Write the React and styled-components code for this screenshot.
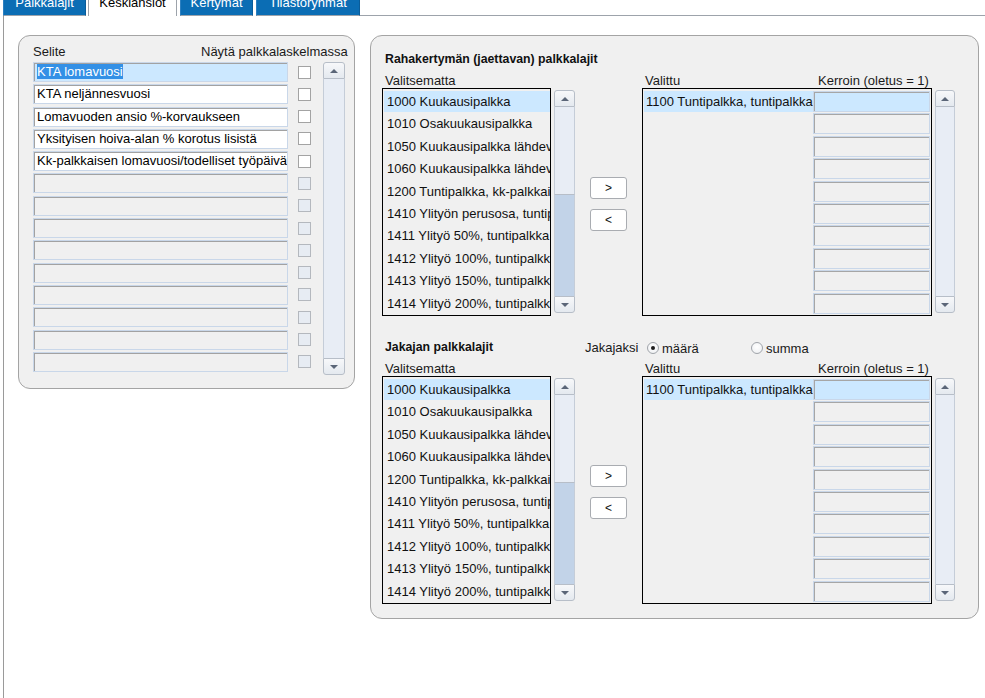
import React from "react";
import styled, { createGlobalStyle, css } from "styled-components";

const GlobalStyle = createGlobalStyle`
  html, body { margin: 0; padding: 0; background: #fff; }
  body { font-family: "Liberation Sans", Arial, sans-serif; font-size: 13px; color: #000; }
  * { box-sizing: border-box; }
`;

const Page = styled.div`
  width: 985px;
  height: 698px;
  overflow: hidden;
  background: #fff;
`;

const TabStrip = styled.div`
  display: flex;
  align-items: flex-end;
  height: 16px;
  overflow: hidden;
  padding-left: 3px;
`;

const Tab = styled.div`
  flex: none;
  width: ${(p) => p.$w}px;
  height: 27px;
  margin-right: ${(p) => p.$gap}px;
  display: flex;
  align-items: center;
  justify-content: center;
  font-size: 13px;
  ${(p) =>
    p.$active
      ? css`
          background: #fff;
          color: #000;
          border-left: 1px solid #9da3ab;
          border-right: 1px solid #9da3ab;
        `
      : css`
          background: #0b6db4;
          color: #fff;
          border-left: 1px solid #2c7fc0;
          border-right: 1px solid #0a5c99;
          border-bottom: 1px solid #9da3ab;
        `}
`;

const TabFiller = styled.div`
  flex: 1;
  height: 16px;
  border-bottom: 1px solid #9da3ab;
`;

const Content = styled.div`
  margin-left: 3px;
  border-left: 1px solid #9a9a9a;
  height: 682px;
  padding: 19px 0 0 14px;
  display: flex;
  align-items: flex-start;
  gap: 15px;
`;

const Panel = styled.div`
  flex: none;
  width: ${(p) => p.$w}px;
  height: ${(p) => p.$h}px;
  background: #f0f0f0;
  border: 1px solid #a4a4a4;
  border-radius: 12px;
`;

const LeftPanel = styled(Panel)`
  padding: 8px 0 0 14px;
`;

const HeaderRow = styled.div`
  display: grid;
  grid-template-columns: 168px auto;
  height: 15px;
  line-height: 15px;
  white-space: nowrap;
  color: #1a1a1a;
`;

const LeftBody = styled.div`
  margin-top: 3px;
  display: flex;
  align-items: flex-start;
`;

const FieldColumn = styled.div`
  width: 255px;
  display: flex;
  flex-direction: column;
  gap: 2.3px;
`;

const Field = styled.div`
  height: 20px;
  border: 1px solid #c9d7e9;
  box-shadow: inset 1px 1px 0 #a2a2a2;
  background: ${(p) => (p.$selected ? "#cce8ff" : p.$empty ? "#f0f0f0" : "#fff")};
  padding-left: 3px;
  line-height: 18px;
  white-space: nowrap;
  overflow: hidden;
`;

const Selection = styled.span`
  background: #3390e6;
  color: #fff;
`;

const CheckColumn = styled.div`
  margin-left: 10px;
  width: 13px;
  display: flex;
  flex-direction: column;
  gap: 2.3px;
`;

const CheckCell = styled.div`
  height: 20px;
  display: flex;
  align-items: center;
`;

const CheckBox = styled.div`
  width: 13px;
  height: 13px;
  border: 1px solid ${(p) => (p.$disabled ? "#b4b8be" : "#a3a3a3")};
  background: ${(p) => (p.$disabled ? "#e7ecf3" : "#fff")};
`;

const ScrollWrap = styled.div`
  flex: none;
  margin-left: ${(p) => p.$ml}px;
  margin-top: ${(p) => p.$mt || 0}px;
  width: ${(p) => p.$w}px;
  height: ${(p) => p.$h}px;
  display: flex;
  flex-direction: column;
`;

const ScrollButton = styled.div`
  flex: none;
  height: 17px;
  border: 1px solid #b7bec8;
  background: linear-gradient(#f7f8fa, #e4e9ef);
  display: flex;
  align-items: center;
  justify-content: center;
  border-radius: ${(p) => (p.$up ? "3px 3px 0 0" : "0 0 3px 3px")};
`;

const Arrow = styled.div`
  width: 0;
  height: 0;
  border-left: 4px solid transparent;
  border-right: 4px solid transparent;
  ${(p) =>
    p.$up
      ? css`border-bottom: 4px solid #5b6678;`
      : css`border-top: 4px solid #5b6678;`}
`;

const Track = styled.div`
  flex: 1;
  display: flex;
  flex-direction: column;
  background: ${(p) => (p.$thumb ? "#c2d3e8" : "#e8edf5")};
  border-left: 1px solid #c5cdd8;
  border-right: 1px solid #c5cdd8;
`;

const Thumb = styled.div`
  flex: none;
  height: ${(p) => p.$h}px;
  background: #e8edf5;
  border-bottom: 1px solid #b7bec8;
  margin: 0 -1px;
  border-left: 1px solid #c5cdd8;
  border-right: 1px solid #c5cdd8;
`;

function Scrollbar({ w, h, ml, mt, thumb }) {
  return (
    <ScrollWrap $w={w} $h={h} $ml={ml} $mt={mt}>
      <ScrollButton $up>
        <Arrow $up />
      </ScrollButton>
      <Track $thumb={!!thumb}>{thumb ? <Thumb $h={thumb} /> : null}</Track>
      <ScrollButton>
        <Arrow />
      </ScrollButton>
    </ScrollWrap>
  );
}

const RightPanel = styled(Panel)`
  padding: 16px 0 0 11px;
`;

const Section = styled.div`
  margin-top: ${(p) => p.$mt || 0}px;
`;

const SectionHead = styled.div`
  display: flex;
  align-items: center;
  height: 15px;
  padding-left: 3px;
`;

const Heading = styled.div`
  width: 200px;
  font-weight: 700;
  font-size: 12.3px;
  line-height: 15px;
  color: #111;
  white-space: nowrap;
`;

const RadioLabel = styled.div`
  width: 62px;
  color: #1a1a1a;
  line-height: 15px;
`;

const RadioOption = styled.div`
  display: flex;
  align-items: center;
  width: ${(p) => p.$w}px;
  gap: 3px;
  line-height: 15px;
  color: #1a1a1a;
  padding-top: 1px;
`;

const RadioCircle = styled.div`
  width: 12px;
  height: 12px;
  border-radius: 50%;
  border: 1px solid #a0a4aa;
  background: radial-gradient(circle at 50% 40%, #ffffff, #eceef1);
  display: flex;
  align-items: center;
  justify-content: center;
  &::after {
    content: "";
    display: ${(p) => (p.$checked ? "block" : "none")};
    width: 4px;
    height: 4px;
    border-radius: 50%;
    background: #1d1d1d;
  }
`;

const ColLabels = styled.div`
  margin-top: 6px;
  height: 15px;
  line-height: 15px;
  display: grid;
  grid-template-columns: 260px 173px auto;
  padding-left: 3px;
  color: #1a1a1a;
  white-space: nowrap;
`;

const ListRow = styled.div`
  display: flex;
  align-items: flex-start;
`;

const ListBox = styled.div`
  flex: none;
  margin-left: ${(p) => p.$ml || 0}px;
  width: ${(p) => p.$w}px;
  height: 228px;
  border: 1px solid #000;
  background: #f0f0f0;
  padding: 2px 1px;
  overflow: hidden;
  display: flex;
  align-items: flex-start;
`;

const ItemColumn = styled.div`
  width: ${(p) => p.$w}px;
  flex: none;
  display: flex;
  flex-direction: column;
`;

const Item = styled.div`
  height: 21px;
  margin-bottom: 1.4px;
  line-height: 21px;
  padding-left: ${(p) => p.$pl}px;
  white-space: nowrap;
  overflow: hidden;
  background: ${(p) => (p.$selected ? "#cce8ff" : "transparent")};
  color: #111;
`;

const FactorInput = styled.div`
  height: 21px;
  margin-bottom: 1.4px;
  border: 1px solid #c9d7e9;
  box-shadow: inset 1px 1px 0 #a6a6a6;
  background: ${(p) => (p.$selected ? "#cce8ff" : "#f0f0f0")};
`;

const ButtonColumn = styled.div`
  flex: none;
  margin-left: 15px;
  margin-top: 89px;
  width: 37px;
  display: flex;
  flex-direction: column;
  gap: 10px;
`;

const MoveButton = styled.div`
  height: 22px;
  background: #fff;
  border: 1px solid #a9acb1;
  border-radius: 3px;
  display: flex;
  align-items: center;
  justify-content: center;
  font-size: 12px;
  color: #111;
`;

const leftRows = [
  "KTA lomavuosi",
  "KTA neljännesvuosi",
  "Lomavuoden ansio %-korvaukseen",
  "Yksityisen hoiva-alan % korotus lisistä",
  "Kk-palkkaisen lomavuosi/todelliset työpäivät",
];

const availableTypes = [
  "1000 Kuukausipalkka",
  "1010 Osakuukausipalkka",
  "1050 Kuukausipalkka lähdeverollinen",
  "1060 Kuukausipalkka lähdeverollinen",
  "1200 Tuntipalkka, kk-palkkainen",
  "1410 Ylityön perusosa, tuntipalkka",
  "1411 Ylityö 50%, tuntipalkka",
  "1412 Ylityö 100%, tuntipalkka",
  "1413 Ylityö 150%, tuntipalkka",
  "1414 Ylityö 200%, tuntipalkka",
];

function TransferSection({ title, extra, mt }) {
  return (
    <Section $mt={mt}>
      <SectionHead>
        <Heading>{title}</Heading>
        {extra}
      </SectionHead>
      <ColLabels>
        <span>Valitsematta</span>
        <span>Valittu</span>
        <span>Kerroin (oletus = 1)</span>
      </ColLabels>
      <ListRow>
        <ListBox $w={169}>
          <ItemColumn $w={166}>
            {availableTypes.map((t, i) => (
              <Item key={t} $pl={3} $selected={i === 0}>
                {t}
              </Item>
            ))}
          </ItemColumn>
        </ListBox>
        <Scrollbar w={21} h={223} ml={3} mt={2} thumb={88} />
        <ButtonColumn>
          <MoveButton>&gt;</MoveButton>
          <MoveButton>&lt;</MoveButton>
        </ButtonColumn>
        <ListBox $w={290} $ml={15}>
          <ItemColumn $w={169}>
            <Item $pl={2} $selected>
              1100 Tuntipalkka, tuntipalkkainen
            </Item>
          </ItemColumn>
          <ItemColumn $w={117}>
            {Array.from({ length: 10 }).map((_, i) => (
              <FactorInput key={i} $selected={i === 0} />
            ))}
          </ItemColumn>
        </ListBox>
        <Scrollbar w={20} h={223} ml={3} mt={2} />
      </ListRow>
    </Section>
  );
}

export default function App() {
  const rows = Array.from({ length: 14 }, (_, i) => leftRows[i] || null);
  return (
    <Page>
      <GlobalStyle />
      <TabStrip>
        <Tab $w={83} $gap={2}>Palkkalajit</Tab>
        <Tab $w={89} $gap={3} $active>Keskiansiot</Tab>
        <Tab $w={73} $gap={3}>Kertymät</Tab>
        <Tab $w={104} $gap={0}>Tilastoryhmät</Tab>
        <TabFiller />
      </TabStrip>
      <Content>
        <LeftPanel $w={337} $h={354}>
          <HeaderRow>
            <span>Selite</span>
            <span>Näytä palkkalaskelmassa</span>
          </HeaderRow>
          <LeftBody>
            <FieldColumn>
              {rows.map((r, i) => (
                <Field key={i} $empty={!r} $selected={i === 0}>
                  {i === 0 ? <Selection>{r}</Selection> : r}
                </Field>
              ))}
            </FieldColumn>
            <CheckColumn>
              {rows.map((r, i) => (
                <CheckCell key={i}>
                  <CheckBox $disabled={!r} />
                </CheckCell>
              ))}
            </CheckColumn>
            <Scrollbar w={22} h={313} ml={12} />
          </LeftBody>
        </LeftPanel>
        <RightPanel $w={609} $h={584}>
          <TransferSection title="Rahakertymän (jaettavan) palkkalajit" />
          <TransferSection
            mt={24}
            title="Jakajan palkkalajit"
            extra={
              <>
                <RadioLabel>Jakajaksi</RadioLabel>
                <RadioOption $w={104}>
                  <RadioCircle $checked />
                  määrä
                </RadioOption>
                <RadioOption $w={80}>
                  <RadioCircle />
                  summa
                </RadioOption>
              </>
            }
          />
        </RightPanel>
      </Content>
    </Page>
  );
}
